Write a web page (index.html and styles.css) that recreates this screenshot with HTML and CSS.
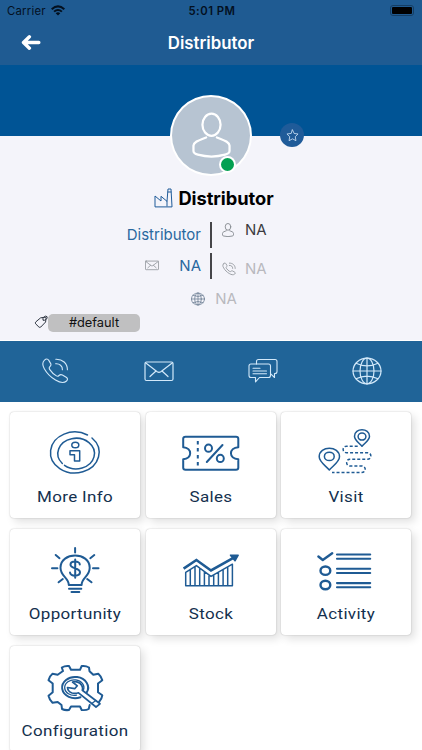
FILE: index.html
```html
<!DOCTYPE html>
<html lang="en">
<head>
  <meta charset="UTF-8">
  <title>Distributor</title>
  <link rel="stylesheet" href="styles.css">
</head>
<body>

  <svg class="symbols" width="0" height="0">
    <symbol id="icon-phone" viewBox="0 0 28 26">
      <path d="M3.500 2.200C5 .7 6.600.6 7.800 2.400L9.700 5.600C10.400 7 9.700 8 8.700 8.900C7.900 9.700 8.100 10.500 8.800 11.600C10.600 14.300 12.600 16.200 15.400 17.900C16.400 18.500 17.200 18.300 18 17.500C19 16.500 20.200 16.300 21.400 17L25.200 19.200C27 20.300 26.800 21.700 25.500 23C22.500 25.700 18.500 24.400 14.500 22C9.800 19.200 6 15.500 3.300 10.700C1.200 7 .9 4.600 3.500 2.200Z"/>
      <path d="M14.600 5.800C18.500 5.400 21.700 8 21.400 11.700M14.800 1.200C21.500.9 26.500 5.500 26.400 11.800"/>
    </symbol>
    <symbol id="icon-mail" viewBox="0 0 30 21">
      <rect x="1" y="1" width="28" height="18.500" rx="1.500"/>
      <path d="M1.500 1.800L13.200 10.800Q15 12 16.800 10.800L28.500 1.800M6 15.500L12 10M24 15.500L18 10"/>
    </symbol>
    <symbol id="icon-globe" viewBox="0 0 30 28">
      <ellipse cx="15" cy="14" rx="14" ry="12.800"/>
      <ellipse cx="15" cy="14" rx="7" ry="12.800"/>
      <path d="M15 1.200V26.800M1 14H29M4 6.200Q15 11.500 26 6.200M4 21.800Q15 16.500 26 21.800"/>
    </symbol>
    <symbol id="icon-user" viewBox="0 0 40 46">
      <ellipse cx="20" cy="12.500" rx="9.300" ry="11.300"/>
      <path d="M14.500 25.500C8.500 28 2 29.500 1.500 34V39.500Q1.500 42 6 43.200Q20 47 34 43.200Q38.500 42 38.500 39.500V34C38 29.500 31.500 28 25.500 25.500"/>
    </symbol>
  </svg>

  <header class="header">
    <div class="status-bar">
      <div class="carrier">
        Carrier
        <svg class="wifi" viewBox="0 0 14 11">
          <path d="M0 3.400Q7-2.800 14 3.400L12.600 4.900Q7 0 1.400 4.900ZM2.400 5.900Q7 1.900 11.600 5.900L10.200 7.300Q7 4.600 3.800 7.300ZM4.700 8.200Q7 6.300 9.300 8.200L7 10.500Z"/>
        </svg>
      </div>
      <div class="time">5:01 PM</div>
      <div class="battery"><span></span></div>
    </div>
    <div class="nav-bar">
      <svg class="back" viewBox="0 0 18 14">
        <path d="M7.500 1.700L2 7L7.500 12.300M2.500 7H16.300"/>
      </svg>
      <h1>Distributor</h1>
    </div>
  </header>

  <section class="profile">
    <div class="banner">
      <div class="avatar">
        <svg class="avatar-icon"><use href="#icon-user"/></svg>
        <span class="online"></span>
      </div>
      <div class="favourite">
        <svg viewBox="0 0 14 14">
          <path d="M7 1L8.800 4.800L13 5.400L10 8.300L10.700 12.600L7 10.600L3.300 12.600L4 8.300L1 5.400L5.200 4.800Z"/>
        </svg>
      </div>
    </div>

    <div class="name">
      <svg class="factory" viewBox="0 0 19 20">
        <path d="M1 18.500V8L7 13V8.300L13 13.300L14 1H17L18 18.500ZM13 13.300V18M14 4H17"/>
      </svg>
      <h2>Distributor</h2>
    </div>

    <div class="details">
      <div class="detail-left">
        <span class="value">Distributor</span>
      </div>
      <div class="detail-right dark">
        <svg class="small-user"><use href="#icon-user"/></svg>
        <span>NA</span>
      </div>
      <div class="detail-left">
        <svg class="small-mail"><use href="#icon-mail"/></svg>
        <span class="value">NA</span>
      </div>
      <div class="detail-right low">
        <svg class="small-phone"><use href="#icon-phone"/></svg>
        <span>NA</span>
      </div>
    </div>
    <div class="website">
      <svg class="small-globe"><use href="#icon-globe"/></svg>
      <span>NA</span>
    </div>
    <div class="tags">
      <svg class="tag-icon" viewBox="0 0 14 14">
        <path d="M7 2.800L11 2.200Q12 2.200 12 3.200L11.600 7L6.800 12Q5.800 12.900 4.900 12L1.600 8.800Q.8 7.900 1.700 7ZM9.200 5.200Q8.200 3.900 9.400 2.500Q11.600.2 13 1.600Q13.900 3 11.800 4.700Q10.500 5.700 9.200 5.200"/>
      </svg>
      <span class="tag">#default</span>
    </div>
  </section>

  <nav class="actions">
    <a><svg class="act-phone"><use href="#icon-phone"/></svg></a>
    <a><svg class="act-mail"><use href="#icon-mail"/></svg></a>
    <a>
      <svg class="act-chat" viewBox="0 0 30 26">
        <path d="M8.500 6V3.500Q8.500 1.500 10.500 1.500H27Q29 1.500 29 3.500V13.500Q29 15.500 27 15.500H26.500V19.500L23 16.200"/>
        <path d="M3 6H20.500Q22.500 6 22.500 8V17.500Q22.500 19.500 20.500 19.500H11.500L7.500 23.800V19.500H3Q1 19.500 1 17.500V8Q1 6 3 6ZM5 10.200H12M5 13H18.500M5 15.800H18.500"/>
      </svg>
    </a>
    <a><svg class="act-globe"><use href="#icon-globe"/></svg></a>
  </nav>

  <main class="grid">
    <div class="card">
      <svg class="card-icon" viewBox="0 0 130 74">
        <path d="M77.500 23A24.300 20.500 0 1 0 82 26M54.500 53.300A18.300 15.300 0 1 0 52.300 51.500"/>
        <ellipse cx="65.300" cy="33" rx="3.500" ry="2.800"/>
        <path d="M60 38.700H69.700V49H64.500V42.700H60Z"/>
      </svg>
      <p>More Info</p>
    </div>
    <div class="card">
      <svg class="card-icon thick" viewBox="0 0 130 74">
        <path d="M39.500 24.700H90Q92.300 24.700 92.300 26.700V35.200C82.500 35.700 82.500 46.700 92.300 47.200V55.700Q92.300 57.700 90 57.700H39.500Q37.200 57.700 37.200 55.700V47.200C46.500 46.700 46.500 35.700 37.200 35.200V26.700Q37.200 24.700 39.500 24.700Z"/>
        <path class="dashes" d="M51.800 29V55" stroke-dasharray="3.400 3.600"/>
        <ellipse cx="62.500" cy="36.200" rx="3.500" ry="3.600"/>
        <ellipse cx="74.300" cy="46.400" rx="3.500" ry="3.600"/>
        <path d="M76.500 33L60.800 50"/>
      </svg>
      <p>Sales</p>
    </div>
    <div class="card">
      <svg class="card-icon" viewBox="0 0 130 74">
        <path d="M48.300 58C45 54 38.200 50 38.200 44.800C38.200 33.500 58.500 33.500 58.500 44.800C58.500 50 51.500 54 48.300 58Z"/>
        <ellipse cx="48.300" cy="44.400" rx="4.900" ry="4.200"/>
        <path d="M81 34.300C78.500 31 73.500 28.500 73.500 24.300C73.500 15.600 88.500 15.600 88.500 24.300C88.500 28.500 83.500 31 81 34.300Z"/>
        <ellipse cx="81" cy="24.600" rx="3.900" ry="3.500"/>
        <path class="dashes" d="M76.700 34.200H65.500C61 34.200 61 40.700 65.500 40.700H86.500C91 40.700 91 47.300 86.500 47.300H69C64.500 47.300 64.500 54 69 54H80.500C85.500 54 85.500 60.600 80.500 60.600H51" stroke-dasharray="3 2"/>
      </svg>
      <p>Visit</p>
    </div>
    <div class="card">
      <svg class="card-icon thick" viewBox="0 0 130 74">
        <path d="M58.800 56C58.800 48.500 50.500 47.500 50.500 38.700C50.500 22.500 79.700 22.500 79.700 38.700C79.700 47.500 71.600 48.500 71.600 56Z"/>
        <path d="M59 59.700H71.300M61.500 63H69.300"/>
        <path d="M65.100 19V23.500M42 39.300H47.400M83 39.300H88.500M45.700 26L49.500 29.200M84.300 26L80.300 29.200M52.800 50L48.600 53.300M77.200 50L81.500 53.300"/>
        <path d="M69.800 35.500C69.800 31.500 60.500 31.500 60.500 35.700C60.500 40 70 38.500 70 43.300C70 47.800 60 47.800 60 43.500M65.200 30.500V48.800"/>
      </svg>
      <p>Opportunity</p>
    </div>
    <div class="card">
      <svg class="card-icon" viewBox="0 0 130 74">
        <path class="zigzag" d="M37.600 39.700L50.400 31L65 41.500L87.400 28.800"/>
        <path class="solid" d="M84.500 26.200H92.200L89 31.800Z"/>
        <path d="M39.700 56.700V43.400L50.400 36.600L65 47.400L86.400 35.200V56.700ZM44.300 40.500V56.700M49 37.500V56.700M53.700 39V56.700M58.400 42.600V56.700M63 46V56.700M67.700 46V56.700M72.400 43.300V56.700M77.100 40.600V56.700M81.700 37.800V56.700"/>
      </svg>
      <p>Stock</p>
    </div>
    <div class="card">
      <svg class="card-icon" viewBox="0 0 130 74">
        <path class="bold" d="M37.400 27.500L41.800 31L51.200 24.300"/>
        <ellipse class="bold" cx="44.400" cy="41.700" rx="4.900" ry="4.200"/>
        <ellipse class="bold" cx="44.400" cy="56" rx="4.900" ry="4.200"/>
        <path class="rows" d="M56 25.500H89.200M56 29.700H89.200M56 39.800H89.200M56 44H89.200M56 54.100H89.200M56 58.300H89.200"/>
      </svg>
      <p>Activity</p>
    </div>
    <div class="card">
      <svg class="card-icon thick" viewBox="0 0 130 74">
        <path d="M53 25L51.800 21.500Q55 19.500 59 20L61 23.800H70L71.700 20Q76 19.500 79 21.500L79.500 25.200L83.300 28.700L88.300 27.700Q91.500 30.500 92.300 34.300L88 37.500V46.300L92.300 49.300Q91.800 53 89 56M79.700 59L78.700 63Q76 64.500 71.700 64L70 60.500H61L59 64Q55 64.500 52 63L51.500 59L47.700 56L42.500 56.700Q39.500 54 38.500 49.700L42.700 46.300V37.500L38.500 34.300Q39.500 30 42.500 27.700L47.700 28.700L53 25"/>
        <path d="M76.800 46.200A13 10.600 0 1 0 70.500 51.200"/>
        <path class="thin" d="M73.300 44.300A9.600 7.800 0 1 0 66.500 49.200"/>
        <path class="wrench" d="M57.500 41.500Q57.800 45.500 62 47Q65.500 48 68.500 46.800L86 61L90 57.800L72.300 44.300Q73.500 40.500 70 37.300Q66.500 34.700 62.500 36L67.300 39.800L64.700 42.700Z"/>
        <path class="thin" d="M81.800 57.500L85.800 54.500"/>
      </svg>
      <p>Configuration</p>
    </div>
  </main>

</body>
</html>
```
FILE: styles.css
```css
* {
  box-sizing: border-box;
}
body {
  margin: 0;
  height: 750px;
  overflow: hidden;
  font-family: Inter, "Liberation Sans", sans-serif;
  background-color: #fff;
}
h1, h2, p {
  margin: 0;
}
svg {
  display: block;
  fill: none;
  stroke: currentColor;
  stroke-linecap: round;
  stroke-linejoin: round;
}
.symbols {
  display: none;
}

/* header */
.header {
  height: 65px;
  background-color: #1f5b92;
}
.status-bar {
  display: grid;
  grid-template-columns: 1fr auto 1fr;
  align-items: center;
  height: 22px;
  padding: 0 5px 0 7px;
  font-size: 11.300px;
  color: #03101f;
}
.carrier {
  display: flex;
  align-items: center;
  gap: 5px;
  letter-spacing: 0.250px;
}
.wifi {
  width: 14px;
  height: 11px;
  margin-top: -1px;
  fill: #03101f;
  stroke: none;
}
.time {
  font-weight: 600;
  letter-spacing: 0.500px;
}
.battery {
  justify-self: end;
  width: 24px;
  height: 11px;
  margin: -1px 3px 0 0;
  padding: 1px;
  border: 1px solid #153e64;
  border-radius: 3px;
}
.battery span {
  display: block;
  height: 7px;
  border-radius: 1px;
  background-color: #000;
}
.nav-bar {
  display: grid;
  grid-template-columns: 60px 1fr 60px;
  align-items: center;
  height: 42px;
  color: #fff;
}
.back {
  width: 20px;
  height: 15px;
  margin: -1px 0 0 21px;
  stroke-width: 3.200;
}
h1 {
  font-size: 16.800px;
  font-weight: 600;
  text-align: center;
}

/* profile */
.profile {
  height: 275px;
  background-color: #f4f4fa;
}
.banner {
  display: grid;
  grid-template-columns: 1fr 82px 1fr;
  height: 71px;
  background-color: #005495;
}
.avatar {
  grid-column: 2;
  position: relative;
  width: 82px;
  height: 81px;
  margin-top: 30px;
  padding: 17px 0 0 20px;
  border: 2px solid #fff;
  border-radius: 50%;
  background-color: #b7c4d2;
  color: #fff;
}
.avatar-icon {
  width: 39px;
  height: 46px;
  margin-top: -2px;
  stroke-width: 2.300;
}
.online {
  position: absolute;
  right: 14px;
  bottom: 1px;
  width: 17px;
  height: 17px;
  border: 2.500px solid #fff;
  border-radius: 50%;
  background-color: #03a051;
}
.favourite {
  display: flex;
  align-items: center;
  justify-content: center;
  width: 24px;
  height: 24px;
  margin: 58px 0 0 28px;
  border-radius: 50%;
  background-color: #1f5b99;
  color: #cfe2f5;
}
.favourite svg {
  width: 13px;
  height: 13px;
  stroke-width: 0.900;
}
.name {
  display: flex;
  justify-content: center;
  align-items: center;
  gap: 5px;
  height: 24px;
  margin-top: 50px;
  padding-left: 6px;
}
.factory {
  width: 19px;
  height: 20px;
  color: #1f5b99;
}
h2 {
  font-size: 18.300px;
  font-weight: 700;
  letter-spacing: -0.050px;
}
.details {
  display: grid;
  grid-template-columns: 212px 1fr;
  row-gap: 5px;
  margin-top: 11.500px;
  font-size: 15px;
}
.detail-left {
  display: flex;
  align-items: center;
  justify-content: flex-end;
  height: 26px;
  padding-right: 9px;
  border-right: 2px solid #454549;
  color: #29689f;
}
.detail-right {
  display: flex;
  align-items: center;
  gap: 11px;
  height: 26px;
  padding-left: 10px;
  color: #b9b9be;
}
.dark {
  height: 16px;
  color: #3c3c40;
}
.low {
  height: 32px;
  margin-bottom: -6px;
}
.small-user {
  width: 12px;
  height: 14px;
  stroke-width: 3;
  color: #85898f;
}
.small-mail {
  width: 14px;
  height: 11px;
  margin-right: 20px;
  stroke-width: 1.800;
  color: #93979d;
}
.small-phone {
  width: 14px;
  height: 14px;
  margin-right: -2px;
  stroke-width: 1.800;
  color: #93979d;
}
.small-globe {
  width: 14px;
  height: 14px;
  stroke-width: 1.800;
  color: #75869a;
}
.website {
  display: flex;
  align-items: center;
  justify-content: center;
  gap: 10px;
  height: 20px;
  margin-top: 10px;
  padding-left: 6px;
  font-size: 15px;
  color: #b9b9be;
}
.tags {
  display: flex;
  align-items: center;
  margin: 5px 0 0 34px;
}
.tag-icon {
  width: 14px;
  height: 14px;
  margin-top: -2px;
  color: #303743;
}
.tag {
  width: 92px;
  height: 18px;
  border-radius: 5px;
  background-color: #c0c0c1;
  color: #111;
  font-size: 12.800px;
  line-height: 18px;
  text-align: center;
}

/* quick actions */
.actions {
  display: grid;
  grid-template-columns: repeat(4, 104px);
  justify-content: center;
  align-items: center;
  height: 61px;
  margin-top: 0.500px;
  background-color: #206498;
  color: #d3e9fa;
}
.actions a {
  display: flex;
  justify-content: center;
}
.act-phone {
  width: 28px;
  height: 26px;
  stroke-width: 1.100;
}
.act-mail {
  width: 30px;
  height: 21px;
  stroke-width: 1.200;
}
.act-chat {
  width: 30px;
  height: 26px;
  stroke-width: 1.100;
}
.act-globe {
  width: 30px;
  height: 28px;
  stroke-width: 1.200;
}

/* menu cards */
.grid {
  display: grid;
  grid-template-columns: repeat(3, 130px);
  gap: 10.500px 5.500px;
  padding: 10px 0 0 10.300px;
}
.card {
  height: 106.500px;
  border-radius: 4px;
  background-color: #fff;
  box-shadow: 0 0 1.500px rgba(0, 0, 0, 0.28), 4px 4px 8px rgba(0, 0, 0, 0.12);
}
.card-icon {
  width: 130px;
  height: 74px;
  color: #1f5b94;
  stroke-width: 1.500;
}
.thick {
  stroke-width: 2;
}
.bold {
  stroke-width: 2.400;
}
.zigzag {
  stroke-width: 2.600;
  stroke-linecap: butt;
  stroke-linejoin: miter;
}
.rows {
  stroke-width: 2.100;
}
.thin {
  stroke-width: 1.300;
}
.dashes {
  stroke-linecap: butt;
}
.wrench {
  fill: #fff;
  stroke-width: 1.700;
}
.solid {
  fill: #1f5b94;
}
.card p {
  font-family: Roboto, sans-serif;
  font-size: 15.300px;
  line-height: 22px;
  letter-spacing: 0.300px;
  text-align: center;
  color: #14304e;
  transform: scaleX(1.110);
}
```
